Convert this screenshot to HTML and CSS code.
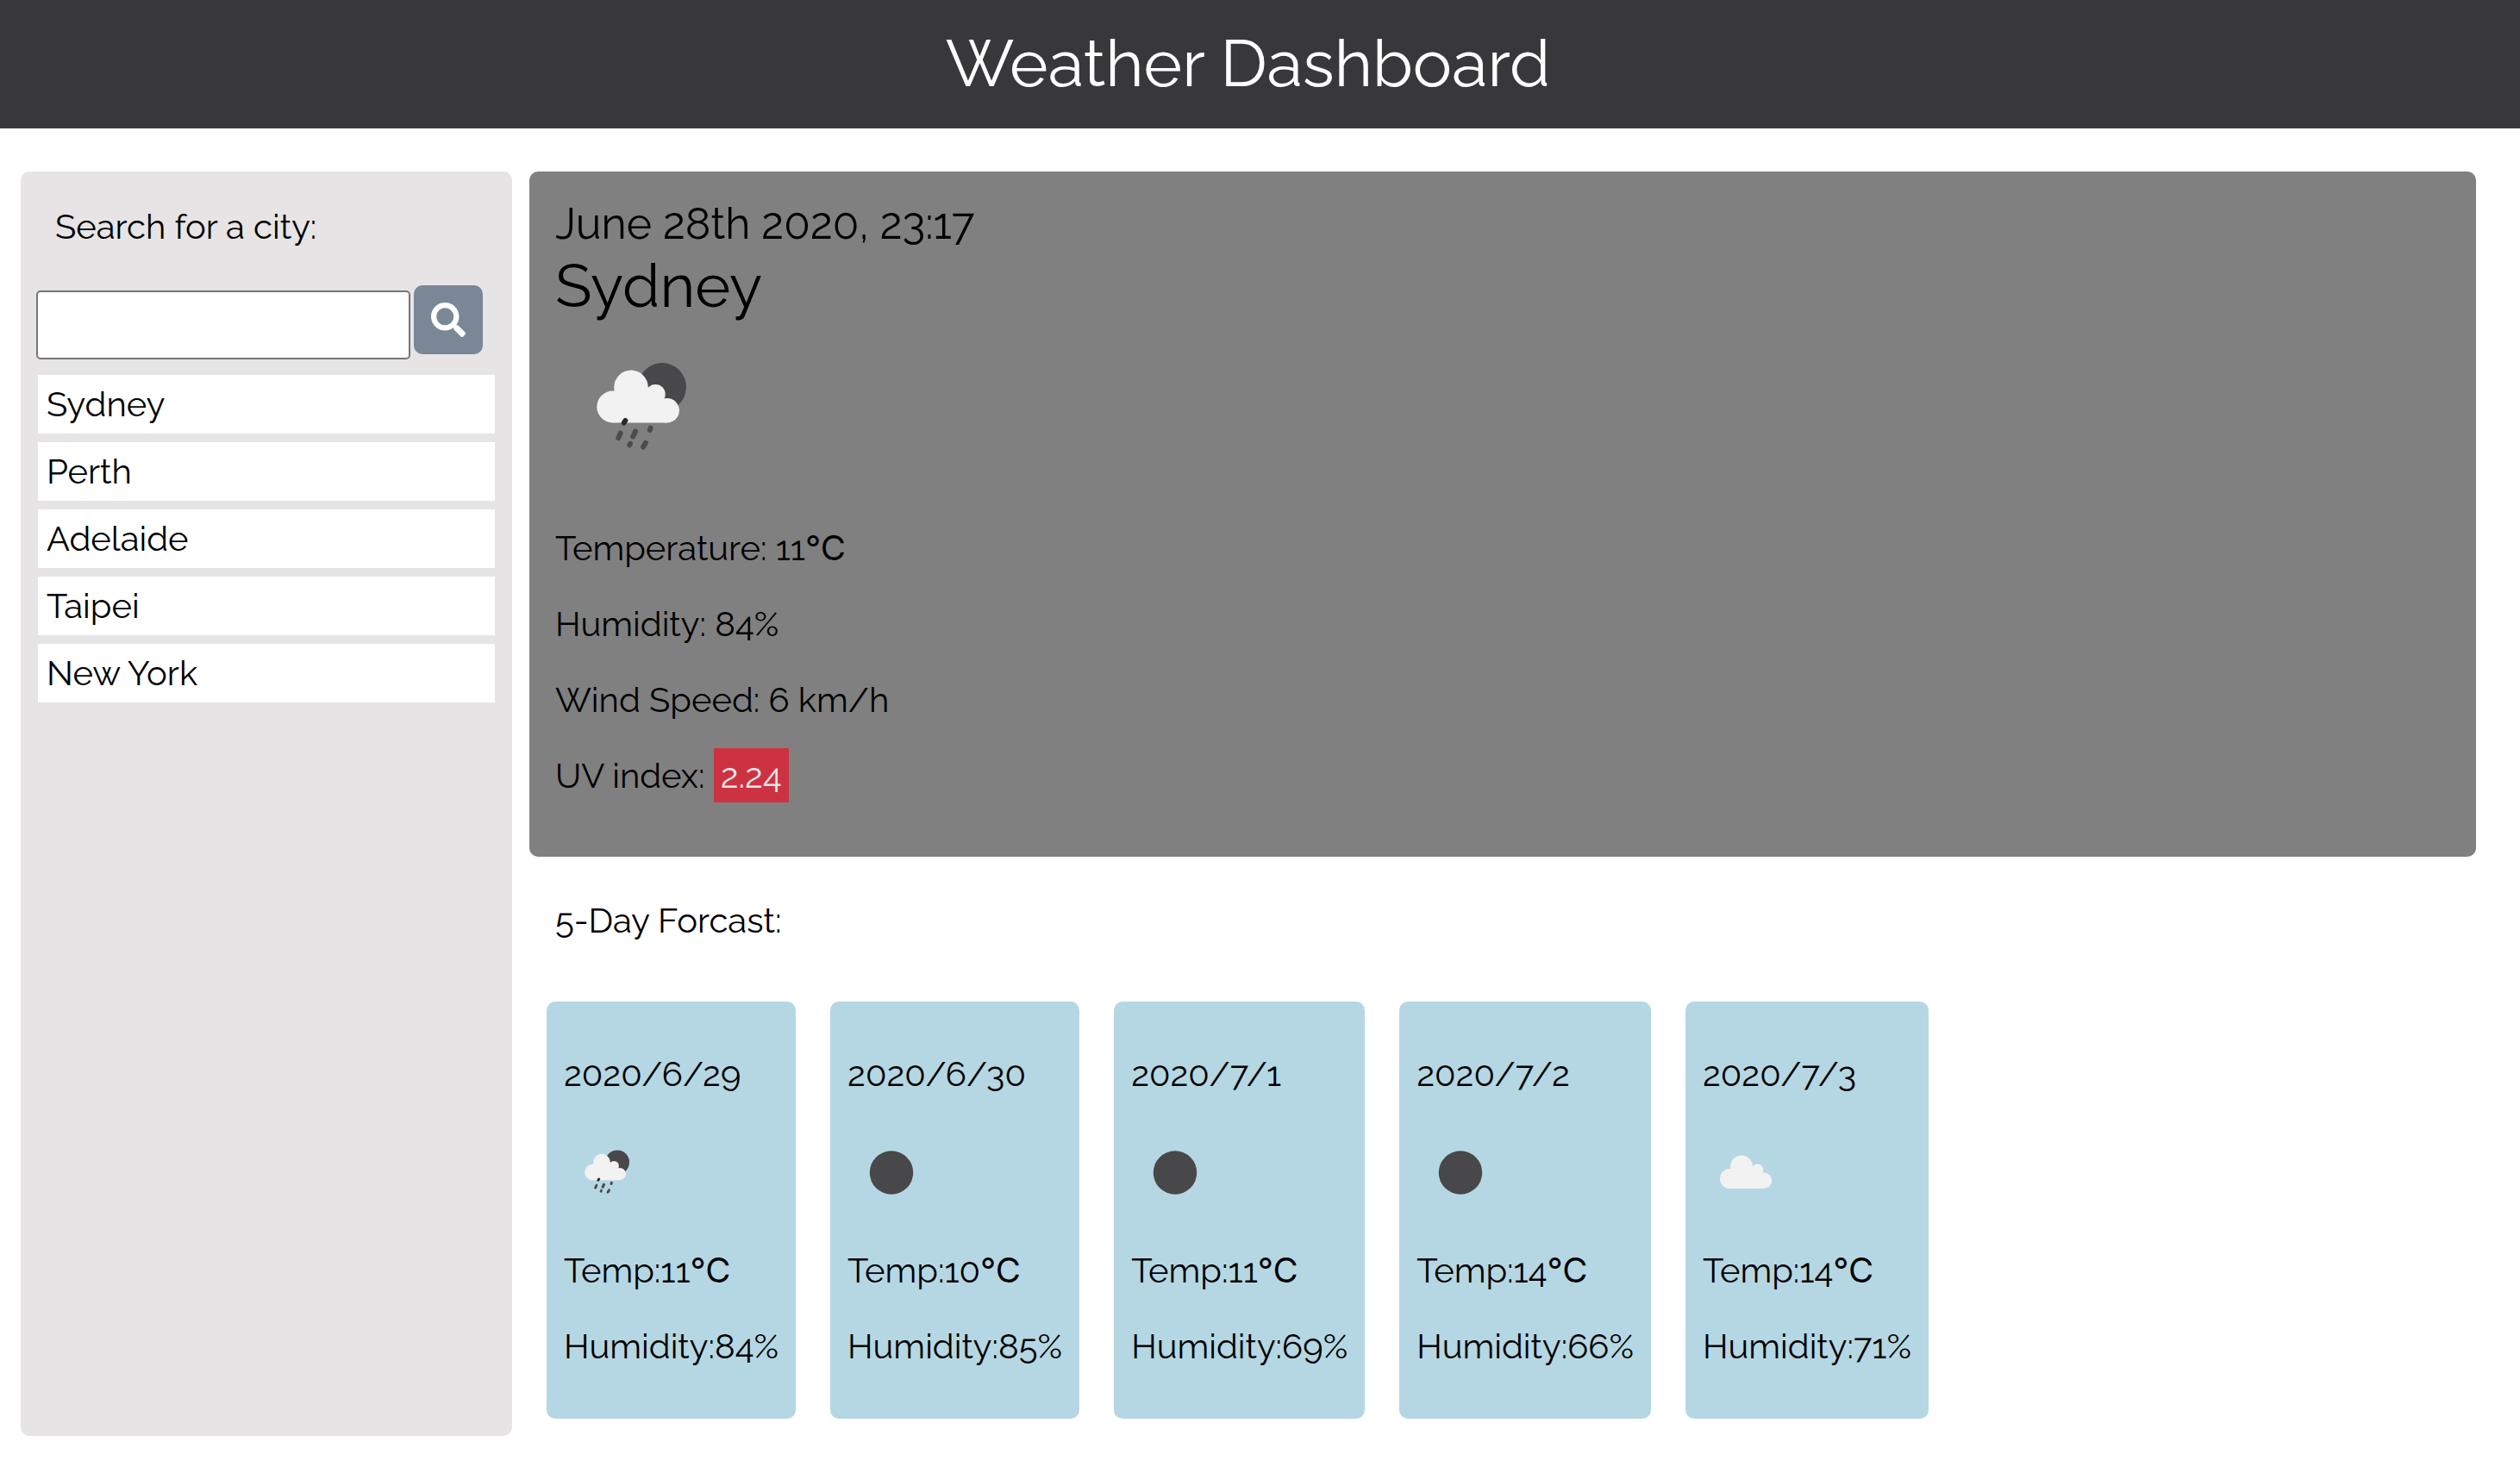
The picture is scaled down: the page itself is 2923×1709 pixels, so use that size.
FILE: index.html
```html
<!DOCTYPE html>
<html lang="en">
<head>
<meta charset="utf-8">
<meta name="viewport" content="width=device-width, initial-scale=1">
<title>Weather Dashboard</title>
<link rel="stylesheet" href="styles.css">
</head>
<body>
<svg class="sprite" aria-hidden="true">
  <symbol id="rain-night" viewBox="0 0 200 200">
    <circle cx="124" cy="77" r="28" fill="#48484a"/>
    <g fill="#f2f2f2">
      <circle cx="66.7" cy="100" r="18.4"/>
      <circle cx="88" cy="77.4" r="19.8"/>
      <circle cx="116.3" cy="85.3" r="11.4"/>
      <circle cx="129.7" cy="104.2" r="14.2"/>
      <path d="M66.7 118.4V90L88 80l28 4 13.7 14v20.4z"/>
    </g>
    <g stroke="#4c4c4e" stroke-width="6" stroke-linecap="round">
      <path stroke="#2a2a2b" d="M81.3 116l-1.6 2.5"/>
      <path d="M75.7 130.5l-2.4 5.6M93 128.5l-2.8 6M110.7 124.5l-.8 2.4M87 142.8l-.8 1.6M104.9 141.8l-2.8 4.8"/>
    </g>
  </symbol>
  <symbol id="clear-night" viewBox="0 0 200 200">
    <circle cx="102" cy="101" r="50.5" fill="#48484a"/>
  </symbol>
  <symbol id="cloud" viewBox="0 0 200 200">
    <g fill="#f2f2f2">
      <circle cx="63" cy="115" r="23"/>
      <circle cx="90" cy="87" r="26"/>
      <circle cx="127" cy="94.5" r="13.7"/>
      <circle cx="142" cy="119.5" r="18.5"/>
      <path d="M63 138V98l27-12 37 4 15 20v28z"/>
    </g>
  </symbol>
</svg>

<header class="header">
  <h1 class="title">Weather Dashboard</h1>
</header>

<main class="main">
  <aside class="sidebar">
    <label class="search-label" for="city">Search for a city:</label>
    <form class="search">
      <input class="search-input" id="city" type="text">
      <button class="search-button" type="button" aria-label="Search">
        <svg class="search-icon" viewBox="0 0 512 512" fill="currentColor" aria-hidden="true"><path d="M505 442.7L405.3 343c-4.500-4.500-10.600-7-17-7H372c27.600-35.300 44-79.700 44-128C416 93.100 322.900 0 208 0S0 93.100 0 208s93.100 208 208 208c48.300 0 92.700-16.400 128-44v16.300c0 6.400 2.500 12.500 7 17l99.700 99.700c9.400 9.400 24.600 9.400 33.900 0l28.300-28.300c9.400-9.400 9.400-24.600.1-34zM208 336c-70.700 0-128-57.200-128-128 0-70.700 57.200-128 128-128 70.700 0 128 57.200 128 128 0 70.700-57.200 128-128 128z"/></svg>
      </button>
    </form>
    <ul class="cities">
      <li class="city">Sydney</li>
      <li class="city">Perth</li>
      <li class="city">Adelaide</li>
      <li class="city">Taipei</li>
      <li class="city">New York</li>
    </ul>
  </aside>

  <div class="content">
    <section class="current">
      <p class="date">June 28th 2020, 23:17</p>
      <h2 class="place">Sydney</h2>
      <svg class="icon-large" role="img" aria-label="Rain"><use href="#rain-night"/></svg>
      <p class="reading">Temperature: 11℃</p>
      <p class="reading">Humidity: 84%</p>
      <p class="reading">Wind Speed: 6 km/h</p>
      <p class="reading">UV index: <span class="uv">2.24</span></p>
    </section>

    <h3 class="forecast-title">5-Day Forcast:</h3>
    <section class="forecast">
      <article class="card">
        <p class="reading">2020/6/29</p>
        <svg class="icon-small" role="img" aria-label="Rain"><use href="#rain-night"/></svg>
        <p class="reading">Temp:11℃</p>
        <p class="reading">Humidity:84%</p>
      </article>
      <article class="card">
        <p class="reading">2020/6/30</p>
        <svg class="icon-small" role="img" aria-label="Clear"><use href="#clear-night"/></svg>
        <p class="reading">Temp:10℃</p>
        <p class="reading">Humidity:85%</p>
      </article>
      <article class="card">
        <p class="reading">2020/7/1</p>
        <svg class="icon-small" role="img" aria-label="Clear"><use href="#clear-night"/></svg>
        <p class="reading">Temp:11℃</p>
        <p class="reading">Humidity:69%</p>
      </article>
      <article class="card">
        <p class="reading">2020/7/2</p>
        <svg class="icon-small" role="img" aria-label="Clear"><use href="#clear-night"/></svg>
        <p class="reading">Temp:14℃</p>
        <p class="reading">Humidity:66%</p>
      </article>
      <article class="card">
        <p class="reading">2020/7/3</p>
        <svg class="icon-small" role="img" aria-label="Clouds"><use href="#cloud"/></svg>
        <p class="reading">Temp:14℃</p>
        <p class="reading">Humidity:71%</p>
      </article>
    </section>
  </div>
</main>
</body>
</html>
```
FILE: styles.css
```css
* {
  box-sizing: border-box;
}

body {
  margin: 0;
  background: #fff;
  color: #000;
  font-family: Raleway, Inter, "Noto Sans CJK SC", sans-serif;
  font-size: 40px;
  line-height: 48px;
}

h1,
h2,
h3,
p,
ul {
  margin: 0;
  padding: 0;
  font-weight: 400;
}

.sprite {
  display: none;
}

.header {
  padding: 29px 28px 30px 0;
  background: #38383a;
  color: #fff;
  text-align: center;
}

.title {
  font-size: 76px;
  line-height: 90px;
}

.main {
  display: grid;
  grid-template-columns: 570px 1fr;
  gap: 20px;
  padding: 50px 51px 44px 24px;
}

.sidebar {
  padding: 40px 18px;
  border-radius: 10px;
  background: #e6e4e5;
}

.search-label {
  display: block;
  padding: 0 22px;
}

.search {
  display: flex;
  gap: 4px;
  height: 86px;
  margin-top: 44px;
}

.search-input {
  align-self: flex-end;
  width: 434px;
  height: 80px;
  padding: 0 10px;
  border: 2px solid #767676;
  border-radius: 5px;
  background: #fff;
  font: inherit;
}

.search-button {
  display: flex;
  align-items: center;
  justify-content: center;
  width: 80px;
  height: 80px;
  padding: 0;
  border: 0;
  border-radius: 10px;
  background: #7a8796;
  color: #fff;
}

.search-icon {
  width: 40px;
  height: 40px;
}

.cities {
  display: grid;
  gap: 10px;
  margin-top: 18px;
  padding: 0 2px;
  list-style: none;
}

.city {
  padding: 10px;
  background: #fff;
}

.content {
  min-width: 0;
}

.current {
  padding: 31px 30px 70px;
  border-radius: 10px;
  background: #808080;
}

.date {
  font-size: 50px;
  line-height: 60px;
}

.place {
  font-size: 70px;
  line-height: 82px;
}

.icon-large {
  display: block;
  width: 200px;
  height: 200px;
}

.reading {
  margin-top: 40px;
}

.uv {
  padding: 8px;
  background: #cd3243;
  color: #e6e4e5;
}

.forecast-title {
  margin-top: 50px;
  padding: 0 30px;
  font-size: 40px;
}

.forecast {
  display: flex;
  flex-wrap: wrap;
  gap: 40px;
  margin-top: 70px;
  padding: 0 20px 20px;
}

.card {
  padding: 20px 20px 60px;
  border-radius: 10px;
  background: #b5d7e3;
}

.icon-small {
  display: block;
  width: 100px;
  height: 100px;
  margin-top: 40px;
}
```
